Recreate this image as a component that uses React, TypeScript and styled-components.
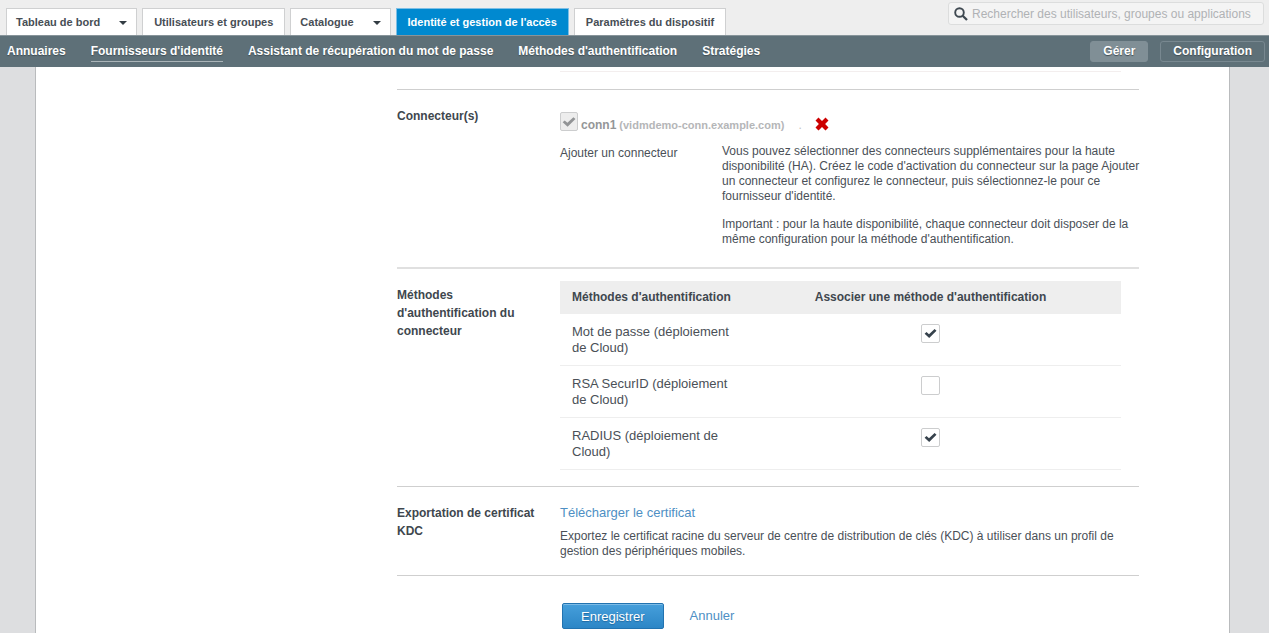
import React from "react";
import styled, { createGlobalStyle } from "styled-components";

const GlobalStyle = createGlobalStyle`
  *, *::before, *::after { box-sizing: border-box; }
  html { height: 100%; overflow: hidden; }
  body {
    margin: 0;
    height: 100%;
    background: #dddee0;
    color: #4a5057;
    font-family: "Liberation Sans", Arial, Helvetica, sans-serif;
    font-size: 12px;
  }
  #root { height: 100%; }
  button, input { font-family: inherit; }
  p, h2 { margin: 0; }
`;

const Shell = styled.div`
  display: flex;
  flex-direction: column;
  min-height: 100%;
`;

const TopBar = styled.header`
  display: flex;
  justify-content: space-between;
  align-items: flex-start;
  height: 35px;
  padding: 0 5px 0 6px;
  background: #eeeeee;
`;

const Tabs = styled.nav`
  display: flex;
  gap: 5px;
  padding-top: 8px;
`;

const Tab = styled.a<{ $active?: boolean; $menu?: boolean }>`
  display: flex;
  align-items: center;
  gap: 19px;
  height: 27px;
  padding: ${(p) => (p.$menu ? "0 9px" : "0 11px")};
  border: 1px solid ${(p) => (p.$active ? "#7dbfe6" : "#cfd0d1")};
  border-bottom: 0;
  background: ${(p) => (p.$active ? "#0089d0" : "#ffffff")};
  color: ${(p) => (p.$active ? "#ffffff" : "#474e55")};
  font-size: 11px;
  font-weight: bold;
  text-decoration: none;
  white-space: nowrap;
`;

const Caret = styled.span`
  margin-top: 2px;
  border: 4px solid transparent;
  border-top-color: #333c44;
  border-bottom: 0;
`;

const Search = styled.label`
  display: flex;
  align-items: center;
  gap: 4px;
  flex: 0 1 316px;
  height: 23px;
  margin-top: 2px;
  padding: 0 5px;
  border: 1px solid #dcdddd;
  border-radius: 3px;
  background: #f4f4f4;
`;

const SearchInput = styled.input`
  flex: 1;
  min-width: 0;
  padding: 0;
  border: 0;
  outline: 0;
  background: transparent;
  font-size: 12px;
  &::placeholder { color: #b0b2b4; opacity: 1; }
`;

const SubNav = styled.nav`
  display: flex;
  align-items: center;
  gap: 25px;
  height: 32px;
  padding: 0 4px 0 7px;
  border-top: 1px solid #87949a;
  background: #5e7078;
`;

const SubLink = styled.a<{ $active?: boolean }>`
  height: 20px;
  border-bottom: 1px solid ${(p) => (p.$active ? "#aab4b8" : "transparent")};
  color: #ffffff;
  font-weight: bold;
  line-height: 18px;
  text-decoration: none;
  text-shadow: 0 1px 1px #3f4d54;
  white-space: nowrap;
`;

const Modes = styled.div`
  display: flex;
  gap: 12px;
  margin-left: auto;
`;

const ModeButton = styled.button<{ $active?: boolean }>`
  height: 21px;
  padding: 0 12px 1px;
  border: 1px solid ${(p) => (p.$active ? "#808f96" : "#788890")};
  border-radius: 3px;
  background: ${(p) => (p.$active ? "#808f96" : "transparent")};
  color: #ffffff;
  font-size: 12px;
  font-weight: bold;
  text-shadow: 0 1px 1px #3f4d54;
`;

const Page = styled.main`
  flex: 1;
  margin: 0 39px 0 35px;
  padding: 4px 90px 0 361px;
  border: solid #b9bbbd;
  border-width: 0 1px;
  background: #ffffff;
`;

const PreviousTableEnd = styled.div`
  height: 18px;
  margin: 0 18px 0 163px;
  border-top: 1px solid #f3eeee;
`;

const Section = styled.section<{ $thick?: boolean }>`
  display: grid;
  grid-template-columns: 163px 1fr;
  border-top: ${(p) => (p.$thick ? "2px solid #e0e0e0" : "1px solid #cfcfcf")};
`;

const SectionTitle = styled.h2`
  padding: 17px 20px 0 0;
  color: #40474e;
  font-size: 12px;
  line-height: 18px;
`;

const ConnectorBody = styled.div`
  padding: 22px 0 20px;
`;

const ConnectorRow = styled.div`
  display: flex;
  align-items: center;
  height: 19px;
`;

const ConnectorLabel = styled.label`
  display: flex;
  align-items: center;
  gap: 3px;
`;

const ConnectorName = styled.span`
  padding-top: 6px;
  color: #949698;
  font-weight: bold;
`;

const ConnectorHost = styled.span`
  padding-top: 6px;
  color: #b5b6b8;
  font-size: 11px;
  font-weight: bold;
`;

const Dot = styled.span`
  margin: 6px 0 0 14px;
  color: #c4c4c4;
  font-size: 12px;
`;

const RemoveButton = styled.button`
  display: flex;
  margin: 4px 0 0 13px;
  padding: 0;
  border: 0;
  background: none;
`;

const AddRow = styled.div`
  display: grid;
  grid-template-columns: 162px max-content;
  padding-top: 13px;
`;

const AddLabel = styled.span`
  line-height: 18px;
`;

const Help = styled.div`
  display: grid;
  gap: 13px;
  line-height: 15px;
`;

const MethodsBody = styled.div`
  padding: 12px 18px 16px 0;
`;

const Table = styled.table`
  width: 100%;
  border-collapse: collapse;
  table-layout: fixed;
`;

const HeadCell = styled.th<{ $wide?: boolean }>`
  width: ${(p) => (p.$wide ? "auto" : "180px")};
  height: 33px;
  padding: 0 0 2px ${(p) => (p.$wide ? 0 : 12)}px;
  background: #eeeeee;
  color: #40474e;
  text-align: ${(p) => (p.$wide ? "center" : "left")};
`;

const Row = styled.tr`
  border-bottom: 1px solid #eeeeee;
`;

const NameCell = styled.td`
  padding: 10px 8px 9px 12px;
  font-size: 13px;
  line-height: 16px;
  vertical-align: top;
`;

const CheckCell = styled.td`
  padding: 10px 0 0;
  text-align: center;
  vertical-align: top;
`;

const BoxWrap = styled.span`
  display: inline-grid;
  vertical-align: top;
  & > * { grid-area: 1 / 1; }
  svg { place-self: center; pointer-events: none; visibility: hidden; }
  input:checked + svg { visibility: visible; }
`;

const Box = styled.input`
  appearance: none;
  width: 19px;
  height: 19px;
  margin: 0;
  border: 1px solid #cccdce;
  border-radius: 2px;
  background: #ffffff;
  &:disabled { width: 18px; background: #ededed; }
`;

const ExportBody = styled.div`
  padding: 17px 18px 16px 0;
`;

const TextLink = styled.a`
  color: #4e8fc4;
  font-size: 13px;
  line-height: 18px;
  text-decoration: none;
`;

const ExportHelp = styled.p`
  padding-top: 7px;
  line-height: 15px;
`;

const Actions = styled.div`
  display: flex;
  align-items: center;
  gap: 26px;
  padding: 27px 0 4px 165px;
  border-top: 1px solid #cfcfcf;
`;

const SaveButton = styled.button`
  height: 26px;
  padding: 0 18px;
  border: 1px solid #2273b0;
  border-radius: 2px;
  background: linear-gradient(#469fdb, #2c86c6);
  box-shadow: inset 0 1px 0 #7cbbe6;
  color: #ffffff;
  font-size: 13px;
  text-shadow: 0 1px 1px #1f68a0;
`;

function CheckMark({ color, size }: { color: string; size: number }) {
  return (
    <svg width={size} height={size} viewBox="0 0 13 13" aria-hidden="true">
      <path d="M.6 6.8 2.5 5 5 7.2 10.6 2 12.5 3.8 5.2 11Z" fill={color} />
    </svg>
  );
}

function CheckBox(props: { id: string; checked?: boolean; disabled?: boolean; label?: string }) {
  return (
    <BoxWrap>
      <Box
        id={props.id}
        type="checkbox"
        defaultChecked={props.checked}
        disabled={props.disabled}
        aria-label={props.label}
      />
      <CheckMark color={props.disabled ? "#929496" : "#36424c"} size={props.disabled ? 14 : 13} />
    </BoxWrap>
  );
}

const tabs = [
  { label: "Tableau de bord", menu: true },
  { label: "Utilisateurs et groupes" },
  { label: "Catalogue", menu: true },
  { label: "Identité et gestion de l'accès", active: true },
  { label: "Paramètres du dispositif" },
];

const links = [
  "Annuaires",
  "Fournisseurs d'identité",
  "Assistant de récupération du mot de passe",
  "Méthodes d'authentification",
  "Stratégies",
];

const methods = [
  { id: "password", name: "Mot de passe (déploiement de Cloud)", checked: true },
  { id: "securid", name: "RSA SecurID (déploiement de Cloud)", checked: false },
  { id: "radius", name: "RADIUS (déploiement de Cloud)", checked: true },
];

export default function App() {
  return (
    <Shell>
      <GlobalStyle />
      <TopBar>
        <Tabs>
          {tabs.map((t) => (
            <Tab key={t.label} href="#" $active={t.active} $menu={t.menu}>
              {t.label}
              {t.menu && <Caret />}
            </Tab>
          ))}
        </Tabs>
        <Search>
          <svg width="14" height="14" viewBox="0 0 14 14" aria-hidden="true">
            <circle cx="5.5" cy="5.5" r="4.3" fill="none" stroke="#3f4951" strokeWidth="1.9" />
            <path d="M8.7 8.7 13 13" stroke="#3f4951" strokeWidth="2.3" />
          </svg>
          <SearchInput
            type="text"
            aria-label="Rechercher"
            placeholder="Rechercher des utilisateurs, groupes ou applications"
          />
        </Search>
      </TopBar>
      <SubNav>
        {links.map((l, i) => (
          <SubLink key={l} href="#" $active={i === 1}>
            {l}
          </SubLink>
        ))}
        <Modes>
          <ModeButton $active>Gérer</ModeButton>
          <ModeButton>Configuration</ModeButton>
        </Modes>
      </SubNav>
      <Page>
        <PreviousTableEnd />
        <Section>
          <SectionTitle>Connecteur(s)</SectionTitle>
          <ConnectorBody>
            <ConnectorRow>
              <ConnectorLabel htmlFor="conn1">
                <CheckBox id="conn1" checked disabled />
                <ConnectorName>conn1</ConnectorName>
                <ConnectorHost>(vidmdemo-conn.example.com)</ConnectorHost>
              </ConnectorLabel>
              <Dot>.</Dot>
              <RemoveButton aria-label="Supprimer le connecteur">
                <svg width="14" height="14" viewBox="0 0 14 14" aria-hidden="true">
                  <path
                    d="M3.5.6 7 3.9 10.5.6 13.5 3.5 10.1 7 13.5 10.5 10.5 13.4 7 10.1 3.5 13.4.5 10.5 3.9 7 .5 3.5Z"
                    fill="#cc0000"
                  />
                </svg>
              </RemoveButton>
            </ConnectorRow>
            <AddRow>
              <AddLabel>Ajouter un connecteur</AddLabel>
              <Help>
                <p>
                  Vous pouvez sélectionner des connecteurs supplémentaires pour la haute
                  <br />
                  disponibilité (HA). Créez le code d'activation du connecteur sur la page Ajouter
                  <br />
                  un connecteur et configurez le connecteur, puis sélectionnez-le pour ce
                  <br />
                  fournisseur d'identité.
                </p>
                <p>
                  Important : pour la haute disponibilité, chaque connecteur doit disposer de la
                  <br />
                  même configuration pour la méthode d'authentification.
                </p>
              </Help>
            </AddRow>
          </ConnectorBody>
        </Section>
        <Section $thick>
          <SectionTitle>Méthodes d'authentification du connecteur</SectionTitle>
          <MethodsBody>
            <Table>
              <thead>
                <tr>
                  <HeadCell>Méthodes d'authentification</HeadCell>
                  <HeadCell $wide>Associer une méthode d'authentification</HeadCell>
                </tr>
              </thead>
              <tbody>
                {methods.map((m) => (
                  <Row key={m.id}>
                    <NameCell>{m.name}</NameCell>
                    <CheckCell>
                      <CheckBox id={m.id} checked={m.checked} label={m.name} />
                    </CheckCell>
                  </Row>
                ))}
              </tbody>
            </Table>
          </MethodsBody>
        </Section>
        <Section>
          <SectionTitle>Exportation de certificat KDC</SectionTitle>
          <ExportBody>
            <TextLink href="#">Télécharger le certificat</TextLink>
            <ExportHelp>
              Exportez le certificat racine du serveur de centre de distribution de clés (KDC) à
              utiliser dans un profil de gestion des périphériques mobiles.
            </ExportHelp>
          </ExportBody>
        </Section>
        <Actions>
          <SaveButton>Enregistrer</SaveButton>
          <TextLink href="#">Annuler</TextLink>
        </Actions>
      </Page>
    </Shell>
  );
}
